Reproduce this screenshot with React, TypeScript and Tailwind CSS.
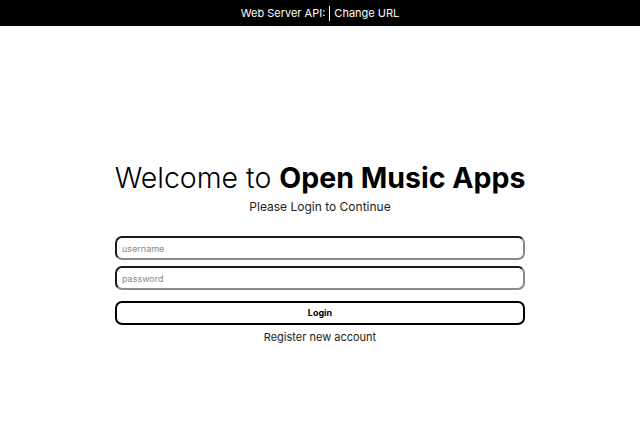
export default function App() {
  return (
    <div className="flex h-[426px] w-[640px] flex-col bg-white font-['Inter',sans-serif] text-black">
      <div className="flex h-[26px] items-center justify-center gap-[4px] bg-black text-[11px] text-white">
        <span>Web Server API:</span>
        <span className="h-[15px] w-px bg-white" />
        <span>Change URL</span>
      </div>

      <div className="flex flex-col items-center pt-[135px]">
        <div className="flex w-[410px] flex-col items-center">
          <h1 className="text-[28.5px] leading-[34px] font-light whitespace-nowrap">
            Welcome to <span className="font-bold">Open Music Apps</span>
          </h1>
          <p className="mt-[4px] text-[12px] leading-[16px] text-[#222]">Please Login to Continue</p>

          <input
            placeholder="username"
            className="mt-[21px] h-[24px] w-full rounded-[7px] border-2 border-t-[#1a1a1a] border-l-[#1a1a1a] border-r-[#8a8a8a] border-b-[#8a8a8a] px-[5px] text-[9px] outline-none placeholder:text-[#888]"
          />
          <input
            type="password"
            placeholder="password"
            className="mt-[6px] h-[24px] w-full rounded-[7px] border-2 border-t-[#1a1a1a] border-l-[#1a1a1a] border-r-[#8a8a8a] border-b-[#8a8a8a] px-[5px] text-[9px] outline-none placeholder:text-[#888]"
          />
          <button className="mt-[11px] h-[24px] w-full rounded-[7px] border-2 border-black bg-white text-[9px] font-bold">
            Login
          </button>
          <a className="mt-[5px] text-[11px] leading-[14px] text-[#222]">Register new account</a>
        </div>
      </div>
    </div>
  );
}
